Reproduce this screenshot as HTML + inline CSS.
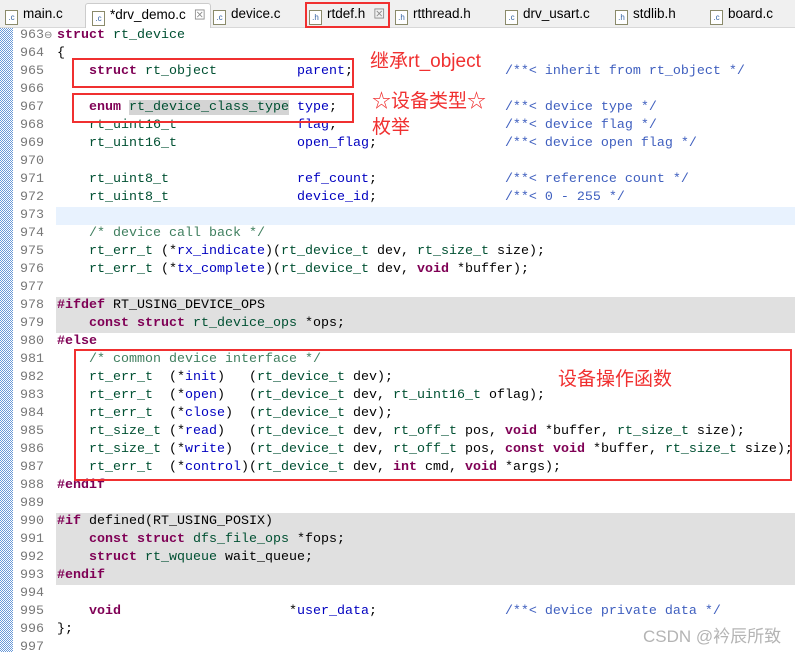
<!DOCTYPE html>
<html><head><meta charset="utf-8"><style>
body{margin:0;width:795px;height:652px;overflow:hidden;background:#fff;position:relative;font-family:"Liberation Mono",monospace;}
.tabs{position:absolute;left:0;top:0;width:795px;height:27px;background:#f0f0f0;border-bottom:1px solid #d8d8d8;}
.tab{position:absolute;top:3px;height:24px;font:13.5px "Liberation Sans","Noto Sans CJK SC",sans-serif;color:#000;line-height:22px;}
.tab.act{background:#fff;border:1px solid #ccc;border-bottom:none;border-radius:3px 3px 0 0;}
.ic{display:inline-block;width:11px;height:13px;border:1px solid #8a8a6a;background:#fff;font-size:8px;line-height:13px;color:#2f5fa0;text-align:center;vertical-align:-2px;margin-right:5px;}
.x{color:#888;margin-left:8px;font-size:12px}
.gut{position:absolute;left:0;top:28px;width:13px;height:624px;background-color:#6a9ad8;background-image:linear-gradient(45deg,#fff 25%,transparent 25%,transparent 75%,#fff 75%),linear-gradient(45deg,#fff 25%,transparent 25%,transparent 75%,#fff 75%);background-size:2px 2px;background-position:0 0,1px 1px;}
.ln{position:absolute;left:14px;width:30px;text-align:right;color:#787878;font-size:13.33px;line-height:18px;}
.cl{position:absolute;left:57px;white-space:pre;font-size:13.33px;line-height:18px;color:#000;}
.hl{position:absolute;left:56px;width:739px;height:18px;background:#e0e0e0;}
.k{color:#7f0055;font-weight:bold}.t{color:#005032}.f{color:#0000c0}.c{color:#3f7f5f}.d{color:#3f5fbf}
.box{position:absolute;border:2px solid #f03030;}
.ann{position:absolute;color:#f03030;font:19px "Liberation Sans","Noto Sans CJK SC",sans-serif;}
</style></head><body>
<div class="tabs">
<div class="tab" style="left:5px"><span class="ic">.c</span>main.c</div>
<div class="tab act" style="left:85px;width:118px;padding-left:6px"><span class="ic">.c</span>*drv_demo.c<span class="x">⊠</span></div>
<div class="tab" style="left:213px"><span class="ic">.c</span>device.c</div>
<div class="tab" style="left:309px"><span class="ic">.h</span>rtdef.h<span class="x">⊠</span></div>
<div class="tab" style="left:395px"><span class="ic">.h</span>rtthread.h</div>
<div class="tab" style="left:505px"><span class="ic">.c</span>drv_usart.c</div>
<div class="tab" style="left:615px"><span class="ic">.h</span>stdlib.h</div>
<div class="tab" style="left:710px"><span class="ic">.c</span>board.c</div>
</div>
<div class="box" style="left:305px;top:2px;width:81px;height:22px"></div>
<div class="gut"></div>
<div class="hl" style="top:207px;background:#e8f2fe"></div>
<div class="hl" style="top:297px"></div><div class="hl" style="top:315px"></div>
<div class="hl" style="top:513px"></div><div class="hl" style="top:531px"></div><div class="hl" style="top:549px"></div><div class="hl" style="top:567px"></div>
<div class="ln" style="top:27px;line-height:18px">963</div><div style="position:absolute;left:44px;top:30px;font-size:10px;color:#777">⊖</div>
<div class="ln" style="top:45px">964</div><div class="ln" style="top:63px">965</div><div class="ln" style="top:81px">966</div><div class="ln" style="top:99px">967</div><div class="ln" style="top:117px">968</div><div class="ln" style="top:135px">969</div><div class="ln" style="top:153px">970</div><div class="ln" style="top:171px">971</div><div class="ln" style="top:189px">972</div><div class="ln" style="top:207px">973</div><div class="ln" style="top:225px">974</div><div class="ln" style="top:243px">975</div><div class="ln" style="top:261px">976</div><div class="ln" style="top:279px">977</div><div class="ln" style="top:297px">978</div><div class="ln" style="top:315px">979</div><div class="ln" style="top:333px">980</div><div class="ln" style="top:351px">981</div><div class="ln" style="top:369px">982</div><div class="ln" style="top:387px">983</div><div class="ln" style="top:405px">984</div><div class="ln" style="top:423px">985</div><div class="ln" style="top:441px">986</div><div class="ln" style="top:459px">987</div><div class="ln" style="top:477px">988</div><div class="ln" style="top:495px">989</div><div class="ln" style="top:513px">990</div><div class="ln" style="top:531px">991</div><div class="ln" style="top:549px">992</div><div class="ln" style="top:567px">993</div><div class="ln" style="top:585px">994</div><div class="ln" style="top:603px">995</div><div class="ln" style="top:621px">996</div><div class="ln" style="top:639px">997</div>
<div class="cl" style="top:27px"><span class="k">struct</span> <span class="t">rt_device</span></div>
<div class="cl" style="top:45px">{</div>
<div class="cl" style="top:63px">    <span class="k">struct</span> <span class="t">rt_object</span>          <span class="f">parent</span>;                   <span class="d">/**&lt; inherit from rt_object */</span></div>
<div class="cl" style="top:99px">    <span class="k">enum</span> <span class="t" style="background:#d4d4d4">rt_device_class_type</span> <span class="f">type</span>;                     <span class="d">/**&lt; device type */</span></div>
<div class="cl" style="top:117px">    <span class="t">rt_uint16_t</span>               <span class="f">flag</span>;                     <span class="d">/**&lt; device flag */</span></div>
<div class="cl" style="top:135px">    <span class="t">rt_uint16_t</span>               <span class="f">open_flag</span>;                <span class="d">/**&lt; device open flag */</span></div>
<div class="cl" style="top:171px">    <span class="t">rt_uint8_t</span>                <span class="f">ref_count</span>;                <span class="d">/**&lt; reference count */</span></div>
<div class="cl" style="top:189px">    <span class="t">rt_uint8_t</span>                <span class="f">device_id</span>;                <span class="d">/**&lt; 0 - 255 */</span></div>
<div class="cl" style="top:225px">    <span class="c">/* device call back */</span></div>
<div class="cl" style="top:243px">    <span class="t">rt_err_t</span> (*<span class="f">rx_indicate</span>)(<span class="t">rt_device_t</span> dev, <span class="t">rt_size_t</span> size);</div>
<div class="cl" style="top:261px">    <span class="t">rt_err_t</span> (*<span class="f">tx_complete</span>)(<span class="t">rt_device_t</span> dev, <span class="k">void</span> *buffer);</div>
<div class="cl" style="top:297px"><span class="k">#ifdef</span> RT_USING_DEVICE_OPS</div>
<div class="cl" style="top:315px">    <span class="k">const struct</span> <span class="t">rt_device_ops</span> *ops;</div>
<div class="cl" style="top:333px"><span class="k">#else</span></div>
<div class="cl" style="top:351px">    <span class="c">/* common device interface */</span></div>
<div class="cl" style="top:369px">    <span class="t">rt_err_t</span>  (*<span class="f">init</span>)   (<span class="t">rt_device_t</span> dev);</div>
<div class="cl" style="top:387px">    <span class="t">rt_err_t</span>  (*<span class="f">open</span>)   (<span class="t">rt_device_t</span> dev, <span class="t">rt_uint16_t</span> oflag);</div>
<div class="cl" style="top:405px">    <span class="t">rt_err_t</span>  (*<span class="f">close</span>)  (<span class="t">rt_device_t</span> dev);</div>
<div class="cl" style="top:423px">    <span class="t">rt_size_t</span> (*<span class="f">read</span>)   (<span class="t">rt_device_t</span> dev, <span class="t">rt_off_t</span> pos, <span class="k">void</span> *buffer, <span class="t">rt_size_t</span> size);</div>
<div class="cl" style="top:441px">    <span class="t">rt_size_t</span> (*<span class="f">write</span>)  (<span class="t">rt_device_t</span> dev, <span class="t">rt_off_t</span> pos, <span class="k">const void</span> *buffer, <span class="t">rt_size_t</span> size);</div>
<div class="cl" style="top:459px">    <span class="t">rt_err_t</span>  (*<span class="f">control</span>)(<span class="t">rt_device_t</span> dev, <span class="k">int</span> cmd, <span class="k">void</span> *args);</div>
<div class="cl" style="top:477px"><span class="k">#endif</span></div>
<div class="cl" style="top:513px"><span class="k">#if</span> defined(RT_USING_POSIX)</div>
<div class="cl" style="top:531px">    <span class="k">const struct</span> <span class="t">dfs_file_ops</span> *fops;</div>
<div class="cl" style="top:549px">    <span class="k">struct</span> <span class="t">rt_wqueue</span> wait_queue;</div>
<div class="cl" style="top:567px"><span class="k">#endif</span></div>
<div class="cl" style="top:603px">    <span class="k">void</span>                     *<span class="f">user_data</span>;                <span class="d">/**&lt; device private data */</span></div>
<div class="cl" style="top:621px">};</div>
<div class="box" style="left:72px;top:58px;width:278px;height:26px"></div>
<div class="box" style="left:72px;top:93px;width:278px;height:26px"></div>
<div class="box" style="left:74px;top:349px;width:714px;height:128px"></div>
<div class="ann" style="left:370px;top:46px">继承rt_object</div>
<div class="ann" style="left:372px;top:86px">☆设备类型☆</div>
<div class="ann" style="left:372px;top:112px">枚举</div>
<div class="ann" style="left:558px;top:364px">设备操作函数</div>
<div style="position:absolute;left:643px;top:622px;font:17px 'Liberation Sans','Noto Sans CJK SC',sans-serif;color:#b4b4b4">CSDN @衿辰所致</div>
</body></html>
